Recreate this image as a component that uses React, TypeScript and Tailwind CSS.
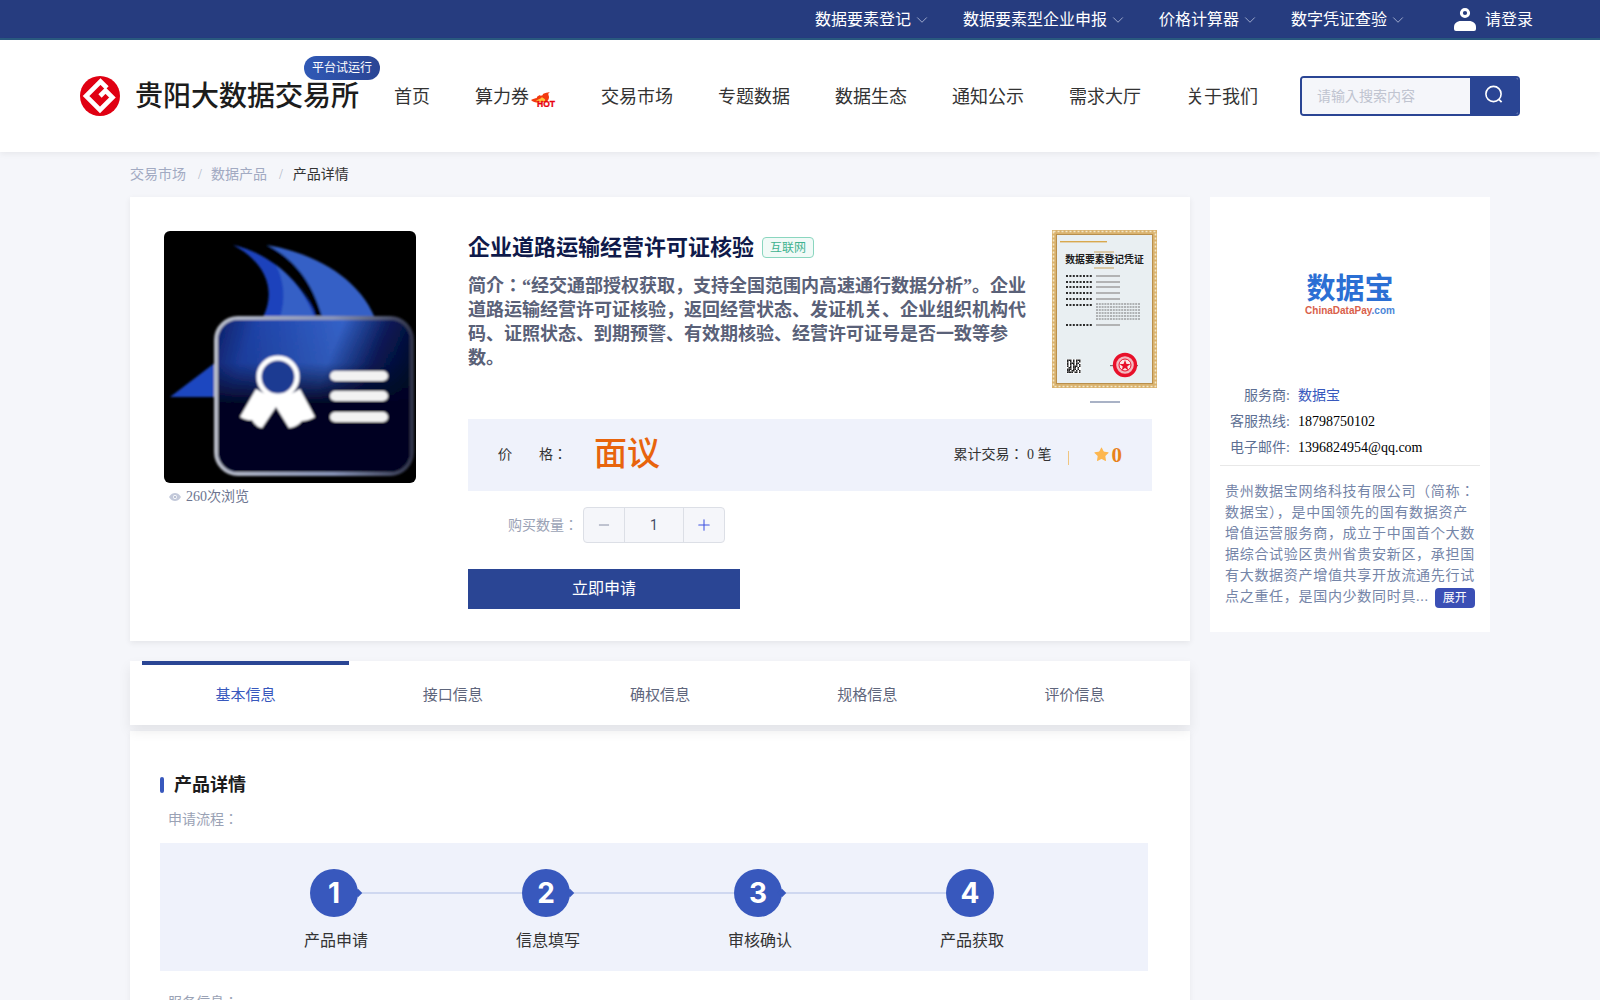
import React from 'react';
import { ChevronDown, Star, Minus, Plus } from 'lucide-react';

const topLinks = ['数据要素登记', '数据要素型企业申报', '价格计算器', '数字凭证查验'];
const tabs = ['基本信息', '接口信息', '确权信息', '规格信息', '评价信息'];
const steps = ['产品申请', '信息填写', '审核确认', '产品获取'];

const LogoMark: React.FC = () => (
    <svg viewBox="4 4 40 40" className="w-10 h-10 shrink-0">
        <circle cx="24" cy="24" r="20" fill="#e00012" />
        <path d="M31 16 L24.5 9.5 L10 24 L24 38 L36.5 25.5 L29.5 18.5 L24 24" fill="none" stroke="#fff" strokeWidth="4.6" />
    </svg>
);

const HotIcon: React.FC = () => (
    <svg viewBox="0 0 27 15" className="w-[27px] h-[15px] mt-[5px]">
        <path d="M2 8 C4 7 6 6 8 6 C7 5 9 4 11 3 C11 4 12 4 14 3 C13 2 15 1 21 0 C18 2 20 3 20 5 C20 8 18 10 15 10 C9 11 5 11 2 8 Z" fill="#f23a0f" />
        <path d="M7 9 C9 7 12 7 13 5 C14 7 17 6 16 9 C13 10 10 10 7 9 Z" fill="#ffc23a" />
        <text x="8" y="14.6" fontSize="9" fontWeight="700" fill="#e8000d" stroke="#e8000d" strokeWidth="0.3" textLength="18" lengthAdjust="spacingAndGlyphs" className="[font-family:'Liberation_Sans',sans-serif]">HOT</text>
    </svg>
);

const UserIcon: React.FC = () => (
    <svg viewBox="0 0 22 24" className="w-[22px] h-6">
        <circle cx="11" cy="6" r="3.6" fill="none" stroke="#fff" strokeWidth="3" />
        <path d="M0 20 C0 16.5 3 14 7 14 H15 C19 14 22 16.5 22 20 V22 A2 2 0 0 1 20 24 H2 A2 2 0 0 1 0 22 Z" fill="#fff" />
    </svg>
);

const SearchIcon: React.FC = () => (
    <svg viewBox="0 0 20 20" className="w-5 h-5 -mt-[2px]">
        <circle cx="9.5" cy="9" r="7.6" fill="none" stroke="#fff" strokeWidth="1.6" />
        <path d="M15 14.5 L17.6 17.2" stroke="#fff" strokeWidth="1.8" />
    </svg>
);

const EyeIcon: React.FC = () => (
    <svg viewBox="0 0 12 8" className="w-3 h-2 shrink-0">
        <path d="M0 4 C2 0.6 4 0 6 0 C8 0 10 0.6 12 4 C10 7.4 8 8 6 8 C4 8 2 7.4 0 4 Z" fill="#c3c9da" />
        <circle cx="6" cy="4" r="1.9" fill="#fff" />
        <circle cx="6" cy="4" r="1.1" fill="#aab2c8" />
    </svg>
);

const ProductPicture: React.FC = () => (
    <svg viewBox="0 0 252 252" className="w-[252px] h-[252px] rounded-md shrink-0">
        <defs>
            <linearGradient id="cardFill" x1="0" y1="0" x2="1" y2="0.3">
                <stop offset="0" stopColor="#0b1e66" />
                <stop offset="0.2" stopColor="#1f43a8" />
                <stop offset="0.6" stopColor="#3462c8" />
                <stop offset="0.82" stopColor="#0a1a58" />
                <stop offset="1" stopColor="#010a2c" />
            </linearGradient>
            <linearGradient id="cardFade" x1="0" y1="0" x2="0" y2="1">
                <stop offset="0" stopColor="#020524" stopOpacity="0" />
                <stop offset="0.28" stopColor="#020524" stopOpacity="0.1" />
                <stop offset="0.55" stopColor="#020524" stopOpacity="1" />
                <stop offset="1" stopColor="#020524" />
            </linearGradient>
            <linearGradient id="cardEdge" x1="0" y1="0" x2="1" y2="0">
                <stop offset="0" stopColor="#b8bcc8" />
                <stop offset="0.6" stopColor="#8894b8" />
                <stop offset="1" stopColor="#30344a" />
            </linearGradient>
            <filter id="soft"><feGaussianBlur stdDeviation="1.3" /></filter>
        </defs>
        <rect width="252" height="252" fill="#000" />
        <g filter="url(#soft)">
            <path d="M69 14 C105 22 138 50 153 86 L99 86 C112 60 103 32 69 14 Z" fill="#1c42bc" />
            <path d="M112 34 C128 46 142 64 150 86 L116 86 C122 68 120 50 112 34 Z" fill="#3560c6" />
            <path d="M103 14 C150 22 194 46 211 87 L156 87 C152 56 132 30 103 14 Z" fill="#3560c6" />
            <path d="M100 14 C130 24 150 56 158 86 L152 86 C144 58 126 32 100 14 Z" fill="#000" />
            <path d="M6 166 L52 131 L52 166 Z" fill="#1e46c0" />
            <rect x="52" y="87" width="196" height="156" rx="22" fill="url(#cardFill)" stroke="url(#cardEdge)" strokeWidth="4" />
            <rect x="54" y="89" width="192" height="152" rx="20" fill="url(#cardFade)" />
            <path d="M92 158 L76 186 Q84 190 88 189 Q92 196 98 197 L112 176 L125 197 Q133 196 138 190 Q144 190 151 186 L136 158 Q114 172 92 158 Z" fill="#fff" />
            <circle cx="114" cy="146" r="19" fill="#1b3a92" stroke="#fff" strokeWidth="5" />
            <rect x="166" y="140" width="58" height="10" rx="5" fill="#f2f2f2" />
            <rect x="166" y="160" width="58" height="10" rx="5" fill="#f2f2f2" />
            <rect x="166" y="181" width="58" height="10" rx="5" fill="#f2f2f2" />
        </g>
    </svg>
);

const Certificate: React.FC = () => {
    const rows = [46, 52, 57, 63, 69, 75, 95];
    const lines = [74, 77, 80, 83, 86, 89];
    const qr = [0, 1, 2, 4, 6, 7, 8, 9, 11, 13, 15, 17, 18, 20, 21, 22, 24, 25, 27, 29, 31, 33, 35, 36, 38, 40, 41, 42, 44, 46, 47, 49, 50, 52, 54, 55, 56, 58, 59, 61, 63, 64, 66, 67, 69, 71, 72, 73, 74, 75, 77, 78, 80];
    return (
        <svg viewBox="0 0 105 158" className="w-[105px] h-[158px] block">
            <rect width="105" height="158" fill="#d9b26e" />
            <rect x="1.5" y="1.5" width="102" height="155" fill="none" stroke="#f4e7c8" strokeWidth="1.6" strokeDasharray="2 2" />
            <rect x="4.5" y="4.5" width="96" height="149" fill="#e9eff2" stroke="#b98f4c" strokeWidth="1" />
            <rect x="8" y="11" width="47" height="1.4" fill="#d8a84e" />
            <path d="M42 22 H62 M42 38 H62" stroke="#c9a35f" strokeWidth="1" />
            <text x="52.5" y="33" textAnchor="middle" fontSize="9.8" fontWeight="700" fill="#1b1b1b" className="[font-family:'Noto_Sans_CJK_SC',sans-serif]">数据要素登记凭证</text>
            {rows.map((y) => (
                <g key={y}>
                    <path d={`M14 ${y} H40`} stroke="#2c2c2c" strokeWidth="1.8" strokeDasharray="2 1.4" />
                    {y < 73 || y === 95 ? <rect x="44" y={y - 0.7} width="24" height="1.4" fill="#9a9a9a" /> : null}
                </g>
            ))}
            {lines.map((y) => (
                <path key={y} d={`M44 ${y} H88`} stroke="#777" strokeWidth="1.2" strokeDasharray="2 0.8" />
            ))}
            <rect x="14.5" y="129" width="14.5" height="14.5" fill="#fff" />
            {qr.map((n) => (
                <rect key={n} x={15 + (n % 9) * 1.5} y={129.5 + Math.floor(n / 9) * 1.5} width="1.5" height="1.5" fill="#222" />
            ))}
            <rect x="58" y="135" width="28" height="1.2" fill="#777" />
            <circle cx="73" cy="135" r="10.5" fill="#f4b9c0" stroke="#e8102a" strokeWidth="3.4" />
            <circle cx="73" cy="135" r="6" fill="#fbe7e7" stroke="#e8102a" strokeWidth="1" />
            <path d="M73 130 L74.5 134 H78.5 L75.2 136.4 L76.4 140.4 L73 138 L69.6 140.4 L70.8 136.4 L67.5 134 H71.5 Z" fill="#e8102a" />
        </svg>
    );
};

const PartnerLogo: React.FC = () => (
    <div className="flex flex-col items-center h-[185px] pt-[74px] [font-family:'Noto_Sans_CJK_SC',sans-serif]">
        <span className="text-[29px] leading-[30px] font-bold text-[#2b6fd4]">数据宝</span>
        <span className="mt-[4px] text-[10px] leading-[11px] font-bold [font-family:'Liberation_Sans',sans-serif]">
            <span className="text-[#d9604a]">ChinaDataPay</span>
            <span className="text-[#4a86d8]">.com</span>
        </span>
    </div>
);

const App: React.FC = () => {
    return (
        <div className="h-screen overflow-hidden bg-[#f5f6fa] [font-family:'Liberation_Serif','Noto_Sans_CJK_JP',serif]">
            {/* top strip */}
            <div className="h-10 bg-[#263c7f] border-b-[2px] border-[#2a5a80] flex items-center justify-end pr-[67px] text-white">
                {topLinks.map((link) => (
                    <div key={link} className="flex items-center mr-8 text-base">
                        <span className="pt-0.5">{link}</span>
                        <ChevronDown size={18} strokeWidth={1.2} className="ml-0.5 mt-0.5 text-[#aab4d4]" />
                    </div>
                ))}
                <div className="flex items-center ml-[15px]">
                    <UserIcon />
                    <span className="ml-[9px] pt-0.5 text-base">请登录</span>
                </div>
            </div>

            {/* main nav */}
            <div className="relative h-[112px] bg-white shadow-[0_2px_6px_rgba(0,0,0,0.06)] flex items-center pl-20">
                <div className="relative flex items-center h-10">
                    <LogoMark />
                    <span className="ml-[15px] pt-0.5 text-[28px] font-medium text-[#1c1c1c] whitespace-nowrap">贵阳大数据交易所</span>
                    <span className="absolute left-[224px] -top-5 w-[76px] h-6 rounded-xl bg-gradient-to-r from-[#3059b6] to-[#2a4594] text-white text-xs flex items-center justify-center">平台试运行</span>
                </div>
                <div className="flex items-center gap-[45px] ml-[35px] pt-0.5 text-lg text-[#333]">
                    <span>首页</span>
                    <span className="flex items-center">算力券<HotIcon /></span>
                    <span>交易市场</span>
                    <span>专题数据</span>
                    <span>数据生态</span>
                    <span>通知公示</span>
                    <span>需求大厅</span>
                    <span>关于我们</span>
                </div>
                <div className="flex ml-[42px] w-[220px] h-10 rounded border-2 border-[#2a4594] overflow-hidden">
                    <div className="w-[168px] bg-[#f5f6fa] pl-[15px] pt-0.5 flex items-center text-sm text-[#c0c4d0]">请输入搜索内容</div>
                    <div className="flex-1 bg-[#2a4594] flex items-center justify-center">
                        <SearchIcon />
                    </div>
                </div>
            </div>

            {/* breadcrumb */}
            <div className="h-[45px] pl-[130px] flex items-center text-sm text-[#a2aac2]">
                <span>交易市场</span>
                <span className="ml-3 mr-[9px] text-[#b4b9c8]">/</span>
                <span>数据产品</span>
                <span className="ml-3 mr-2.5 text-[#b4b9c8]">/</span>
                <span className="text-[#333]">产品详情</span>
            </div>

            <div className="flex items-start gap-5 pl-[130px]">
                <div className="w-[1060px] shrink-0">
                    {/* product card */}
                    <div className="h-[444px] bg-white shadow-[0_2px_6px_rgba(0,0,0,0.07)] flex pl-[34px] pt-[34px]">
                        <div className="w-[252px] mr-[52px] shrink-0">
                            <ProductPicture />
                            <div className="flex items-center mt-1 ml-[5px] h-[20px] text-sm text-[#6d7590]">
                                <EyeIcon />
                                <span className="ml-[5px]">260次浏览</span>
                            </div>
                        </div>
                        <div className="w-[684px]">
                            <div className="flex w-[700px] h-[188px]">
                                <div className="w-[560px] shrink-0">
                                    <div className="flex items-center h-8">
                                        <span className="text-[22px] font-bold text-[#0f1a4a] whitespace-nowrap">企业道路运输经营许可证核验</span>
                                        <span className="ml-2 w-[52px] h-[21px] rounded-sm border border-[#8ad6bf] bg-[#f1faf7] pt-px text-xs text-[#3fb28f] flex items-center justify-center">互联网</span>
                                    </div>
                                    <p className="mt-[11px] text-lg leading-6 font-bold text-[#5a6178]">
                                        简介：“经交通部授权获取，支持全国范围内高速通行数据分析”。企业道路运输经营许可证核验，返回经营状态、发证机关、企业组织机构代码、证照状态、到期预警、有效期核验、经营许可证号是否一致等参数。
                                    </p>
                                </div>
                                <div className="ml-6 w-[105px] shrink-0 -mt-px">
                                    <Certificate />
                                    <div className="mt-[13px] mx-auto w-[30px] h-[2px] bg-[#a9b2c6]" />
                                </div>
                            </div>

                            <div className="h-[72px] bg-[#eff2fb] flex items-center pl-[30px] pr-[30px] text-sm text-[#333]">
                                <span className="w-[41px]">价</span>
                                <span>格：</span>
                                <span className="ml-[27px] text-[33px] font-medium text-[#e8640c]">面议</span>
                                <span className="ml-auto">累计交易： 0 笔</span>
                                <span className="ml-4 w-px h-[14px] mt-[6px] bg-[#f0c580]" />
                                <Star size={17} fill="#fdb750" strokeWidth={0} className="ml-6 -mt-0.5" />
                                <span className="ml-[2px] text-[21px] font-bold text-[#e8821c]">0</span>
                            </div>

                            <div className="flex items-center mt-4 pl-10">
                                <span className="pt-0.5 text-sm text-[#9aa2b5] mr-[5px]">购买数量：</span>
                                <div className="flex w-[142px] h-9 rounded border border-[#dcdfe6] bg-[#f5f6fa] text-sm text-[#444c66] [font-family:'Roboto',sans-serif]">
                                    <span className="w-[41px] flex items-center justify-center border-r border-[#dcdfe6] text-[#7f889f]">
                                        <Minus size={16} strokeWidth={1.4} />
                                    </span>
                                    <span className="flex-1 flex items-center justify-center">1</span>
                                    <span className="w-[41px] flex items-center justify-center border-l border-[#dcdfe6] text-[#3f52e0]">
                                        <Plus size={18} strokeWidth={1.4} />
                                    </span>
                                </div>
                            </div>

                            <div className="mt-[26px] w-[272px] h-10 bg-[#2a4594] text-white text-base flex items-center justify-center">立即申请</div>
                        </div>
                    </div>

                    {/* tabs */}
                    <div className="relative z-10 mt-5 h-16 bg-white shadow-[0_6px_12px_rgba(0,0,0,0.08)] px-3 grid grid-cols-5">
                        {tabs.map((tab, i) => (
                            <div
                                key={tab}
                                className={i === 0
                                    ? 'flex items-center justify-center border-t-4 border-[#2a4594] text-[15px] text-[#3858bd]'
                                    : 'flex items-center justify-center border-t-4 border-transparent text-[15px] text-[#5f667c]'}
                            >
                                {tab}
                            </div>
                        ))}
                    </div>

                    {/* details */}
                    <div className="mt-[6px] bg-white shadow-[0_2px_6px_rgba(0,0,0,0.06)] pl-[30px] pt-[46px] h-[400px]">
                        <div className="flex items-center h-4">
                            <span className="w-1 h-4 rounded-sm bg-[#3858bd]" />
                            <span className="ml-[10px] text-lg font-bold text-[#1c1c1c]">产品详情</span>
                        </div>
                        <div className="mt-[15px] ml-2 h-6 flex items-center text-sm text-[#9aa2b5]">申请流程：</div>
                        <div className="mt-[11px] w-[988px] h-32 bg-[#eff2fb] pl-[150px] pt-[26px] flex">
                            {steps.map((step, i) => (
                                <div key={step} className="w-[212px] shrink-0">
                                    <div className="flex items-center">
                                        <div className="relative w-12 h-12 rounded-full bg-[#3858bd] text-white text-[28px] font-bold flex items-center justify-center shrink-0 [font-family:'Inter',sans-serif]">
                                            {i + 1}
                                            {i < 3 ? <span className="absolute -right-[3px] top-[21px] w-[6px] h-[6px] rotate-45 bg-[#3858bd]" /> : null}
                                        </div>
                                        {i < 3 ? <div className="w-[164px] h-[2px] bg-[#cfd8f0]" /> : null}
                                    </div>
                                    <div className="-ml-[6px] mt-3 leading-6 text-base text-[#333] whitespace-nowrap">{step}</div>
                                </div>
                            ))}
                        </div>
                        <div className="mt-5 ml-2 h-6 flex items-center text-sm text-[#9aa2b5]">服务信息：</div>
                    </div>
                </div>

                {/* provider */}
                <div className="w-[280px] h-[435px] shrink-0 bg-white">
                    <PartnerLogo />
                    <div className="text-sm pt-px">
                        <div className="flex items-center h-[26px]">
                            <span className="w-20 text-right text-[#5d6f93]">服务商:</span>
                            <span className="ml-2 text-[#3858bd]">数据宝</span>
                        </div>
                        <div className="flex items-center h-[26px]">
                            <span className="w-20 text-right text-[#5d6f93]">客服热线:</span>
                            <span className="ml-2 text-black">18798750102</span>
                        </div>
                        <div className="flex items-center h-[26px]">
                            <span className="w-20 text-right text-[#5d6f93]">电子邮件:</span>
                            <span className="ml-2 text-black">1396824954@qq.com</span>
                        </div>
                    </div>
                    <div className="mx-[10px] mt-1 border-t border-[#e8e8e8] px-[5px] pt-[15px]">
                        <p className="text-sm leading-[21px] tracking-[0.7px] text-[#7585a8]">
                            贵州数据宝网络科技有限公司（简称：数据宝），是中国领先的国有数据资产增值运营服务商，成立于中国首个大数据综合试验区贵州省贵安新区，承担国有大数据资产增值共享开放流通先行试点之重任，是国内少数同时具...
                            <span className="inline-flex items-center justify-center ml-[6px] w-10 h-5 rounded bg-[#3b4fb5] text-xs text-white align-middle tracking-normal">展开</span>
                        </p>
                    </div>
                </div>
            </div>
        </div>
    );
};

export default App;
